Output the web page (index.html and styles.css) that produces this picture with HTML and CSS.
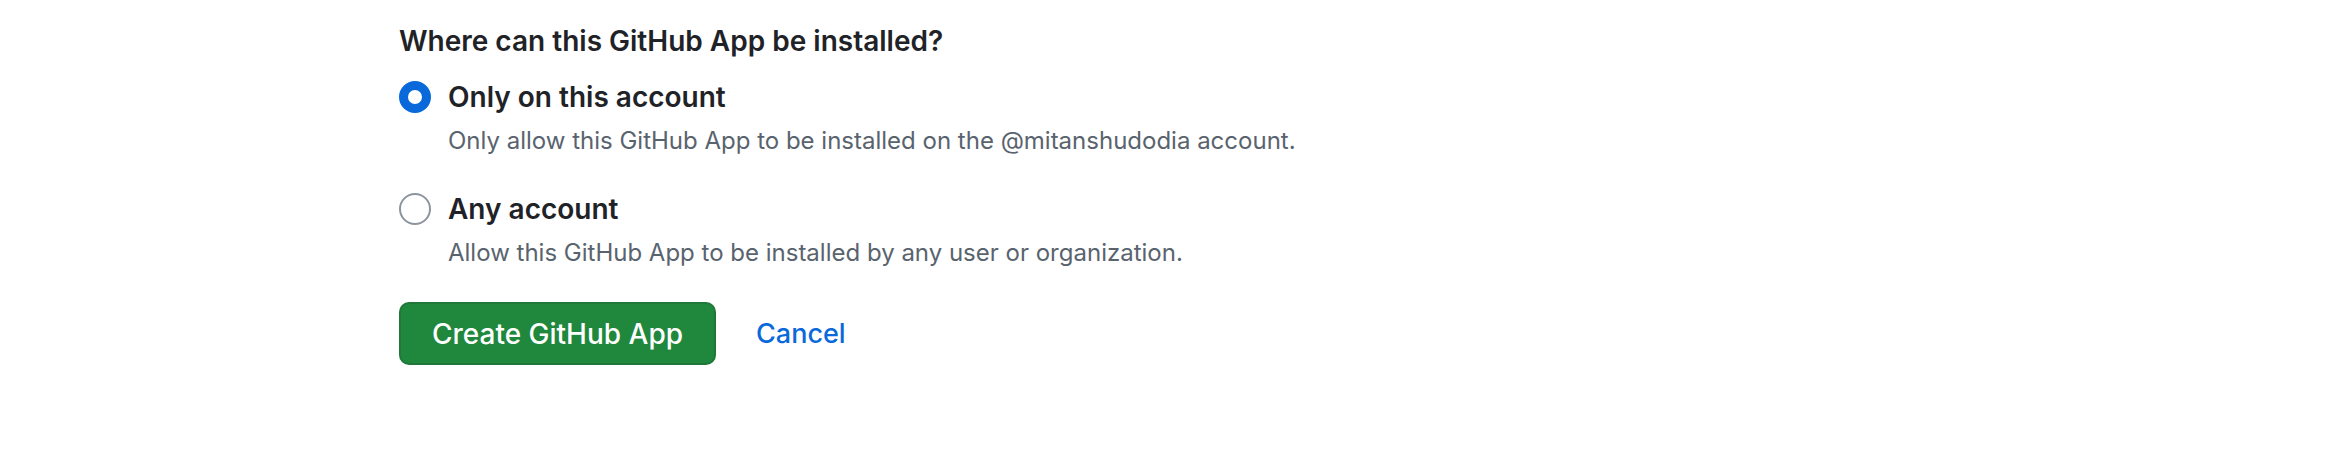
FILE: index.html
```html
<!DOCTYPE html>
<html lang="en">
<head>
<meta charset="utf-8">
<title>Where can this GitHub App be installed?</title>
<link rel="stylesheet" href="styles.css">
</head>
<body>
<main class="page">
  <form class="install-form">
    <h3 class="question">Where can this GitHub App be installed?</h3>
    <div class="option">
      <span class="radio radio-checked" aria-hidden="true"></span>
      <div class="option-body">
        <div class="option-label">Only on this account</div>
        <p class="option-note">Only allow this GitHub App to be installed on the @mitanshudodia account.</p>
      </div>
    </div>
    <div class="option">
      <span class="radio" aria-hidden="true"></span>
      <div class="option-body">
        <div class="option-label">Any account</div>
        <p class="option-note">Allow this GitHub App to be installed by any user or organization.</p>
      </div>
    </div>
    <div class="actions">
      <button type="button" class="btn-primary">Create GitHub App</button>
      <a class="cancel" href="#">Cancel</a>
    </div>
  </form>
</main>
</body>
</html>
```
FILE: styles.css
```css
html, body {
  margin: 0;
  padding: 0;
  background: #ffffff;
}
body {
  font-family: Inter, "Noto Sans", "Liberation Sans", sans-serif;
  color: #1f2328;
}
.page {
  padding: 20px 0 0 399px;
}
.install-form {
  display: flex;
  flex-direction: column;
}
.question {
  margin: 0;
  font-size: 28px;
  line-height: 42px;
  font-weight: 600;
  color: #1f2328;
}
.option {
  display: flex;
  gap: 17px;
  margin-top: 14px;
}
.option + .option {
  margin-top: 29px;
}
.radio {
  flex: none;
  box-sizing: border-box;
  width: 32px;
  height: 32px;
  margin-top: 5px;
  border-radius: 50%;
  border: 2px solid #8c959f;
  background: #ffffff;
}
.radio-checked {
  border: 9px solid #0969da;
}
.option-body {
  display: flex;
  flex-direction: column;
}
.option-label {
  font-size: 28px;
  line-height: 42px;
  font-weight: 600;
  color: #1f2328;
}
.option-note {
  margin: 5px 0 0;
  font-size: 24px;
  line-height: 36px;
  color: #59636e;
}
.actions {
  display: flex;
  align-items: center;
  gap: 40px;
  margin-top: 31px;
}
.btn-primary {
  box-sizing: border-box;
  width: 317px;
  height: 63px;
  border: 2px solid rgba(31, 35, 40, 0.15);
  border-radius: 10px;
  background: #1f883d;
  color: #ffffff;
  font-family: inherit;
  font-size: 28px;
  font-weight: 500;
  padding: 0;
}
.cancel {
  color: #0969da;
  text-decoration: none;
  font-size: 27px;
  font-weight: 500;
}
```
